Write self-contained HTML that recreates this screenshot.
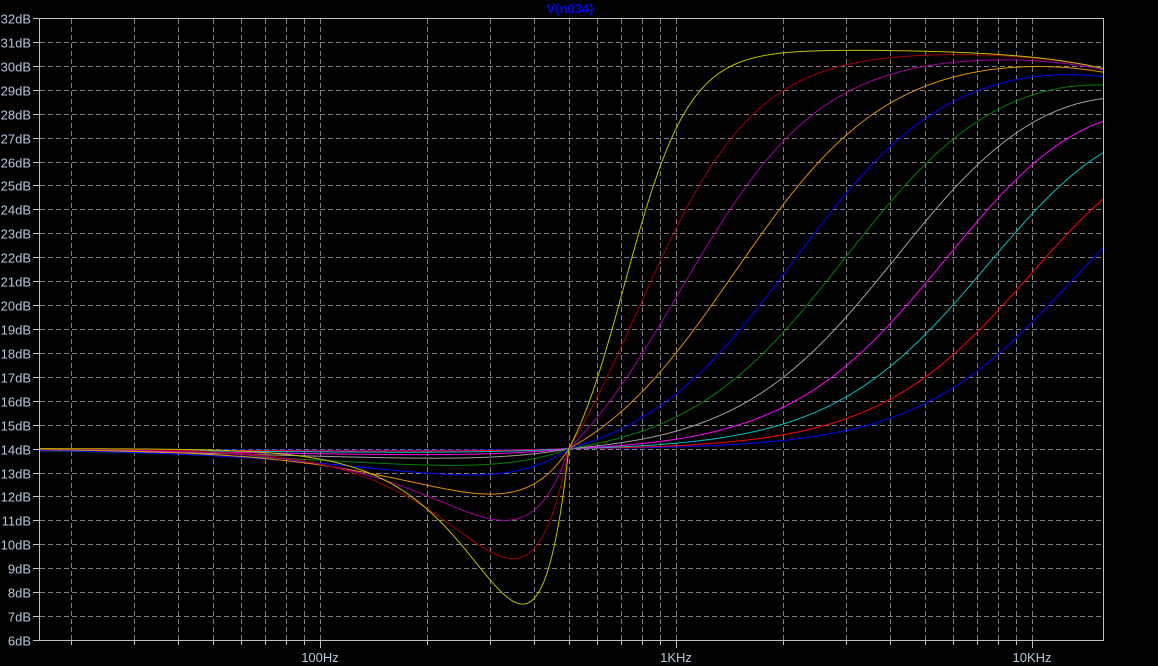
<!DOCTYPE html>
<html><head><meta charset="utf-8"><style>
html,body{margin:0;padding:0;background:#000;width:1158px;height:666px;overflow:hidden}
svg{display:block}
text{font-family:"Liberation Sans",sans-serif;font-size:13px;fill:#b4c8dc}
</style></head><body>
<svg id="s" width="1158" height="666" viewBox="0 0 1158 666" xmlns="http://www.w3.org/2000/svg">
<text x="570" y="13" text-anchor="middle" style="fill:#0000ff;font-weight:bold;font-size:13px">V(n034)</text>
<g id="grid" stroke="#808080" stroke-width="1" stroke-dasharray="5,3" fill="none"></g>
<g id="ticks" stroke="#c0c0c0" stroke-width="1" fill="none"></g>
<g id="labels"></g>
<g id="curves" fill="none" stroke-width="1"></g>
<rect x="39.5" y="18.5" width="1064" height="622" fill="none" stroke="#c0c0c0" stroke-width="1"/>
</svg>
<script>
(function(){
var NS="http://www.w3.org/2000/svg";
function el(t,a,p,txt){var e=document.createElementNS(NS,t);for(var k in a)e.setAttribute(k,a[k]);if(txt!==undefined)e.textContent=txt;p.appendChild(e);return e;}
var X=function(f){return 320+356*Math.log10(f/100);};
var Y=function(db){return 640-(db-6)*23.923;};
var grid=document.getElementById('grid'),ticks=document.getElementById('ticks'),labels=document.getElementById('labels'),curves=document.getElementById('curves');
for(var d=6;d<=32;d++){
  var y=Math.round(Y(d))+0.5;
  if(d>6&&d<32) el('line',{x1:40,y1:y,x2:1103,y2:y},grid);
  el('line',{x1:33,y1:y,x2:39,y2:y},ticks);
  el('text',{x:31,y:y+5,'text-anchor':'end'},labels,d+'dB');
}
var decs=[10,100,1000,10000];
decs.forEach(function(dc){
  for(var m=1;m<10;m++){
    var x=X(dc*m); if(x<=40||x>=1103)continue;
    var xr=Math.round(x)+0.5;
    el('line',{x1:xr,y1:19,x2:xr,y2:640},grid);
    el('line',{x1:xr,y1:640,x2:xr,y2:(m==1?648:645)},ticks);
  }
});
[['100Hz',100],['1KHz',1000],['10KHz',10000]].forEach(function(l){
  el('text',{x:Math.round(X(l[1])),y:662,'text-anchor':'middle'},labels,l[0]);
});
var u0=Math.log10(500);
function sig(z){return 1/(1+Math.exp(-z));}
var Hc=16.7;
var C=[
 ['#c0c000',632,11,6.5,0.13],
 ['#a00000',662,6,4.6,0.157],
 ['#a000a0',700,5,3.0,0.18],
 ['#e09000',745,4.6,1.9,0.22],
 ['#0000ff',796,4.5,1.1,0.28],
 ['#008000',845,4.4,0.7,0.33],
 ['#a0a0a0',895,4.4,0.4,0.38],
 ['#ff00ff',945,4.4,0.25,0.42],
 ['#00c0c0',990,4.4,0.15,0.46],
 ['#ff0000',1038,4.4,0.1,0.5],
 ['#0000ff',1080,4.4,0.07,0.55]
];
function frac(u,c,k){var s0=sig(k*(u0-c));return (sig(k*(u-c))-s0)/(1-s0);}
for(var i=C.length-1;i>=0;i--){
  var p=C[i],k=p[2];
  var u22=2+(p[1]-320)/356;
  var lo=2,hi=7;
  for(var it=0;it<60;it++){var c=(lo+hi)/2; if(frac(u22,c,k)>8/Hc)lo=c;else hi=c;}
  var c=(lo+hi)/2;
  var pts=[];
  for(var x=40;x<=1103;x+=1){
    var u=2+(x-320)/356, f=Math.pow(10,u), db;
    if(u>=u0){db=14+Hc*frac(u,c,k);}
    else{var t=(u0-u)/p[4];db=14-p[3]*t*Math.exp(1-t);}
    db-=10*Math.log10(1+(f/35000)*(f/35000));
    pts.push(x+','+Y(db).toFixed(2));
  }
  el('polyline',{points:pts.join(' '),stroke:p[0]},curves);
}
})();
</script>
</body></html>
